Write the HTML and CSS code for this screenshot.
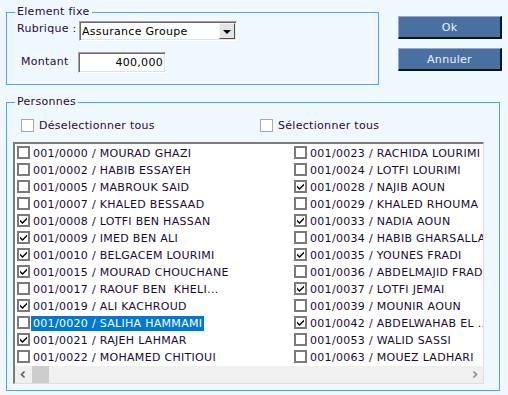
FILE: index.html
```html
<!DOCTYPE html>
<html lang="fr">
<head>
    <meta charset="UTF-8">
    <title>Element fixe</title>
    <link rel="stylesheet" href="styles.css">
</head>
<body>
    <div class="top">
        <fieldset class="group fixe">
            <legend>Element fixe</legend>
            <div class="field rubrique">
                <label>Rubrique :</label>
                <div class="combo">
                    <span class="combo-text">Assurance Groupe</span>
                    <span class="combo-btn"><span class="tri"></span></span>
                </div>
            </div>
            <div class="field montant">
                <label>Montant</label>
                <div class="amount">400,000</div>
            </div>
        </fieldset>

        <div class="actions">
            <button class="btn">Ok</button>
            <button class="btn">Annuler</button>
        </div>
    </div>

    <fieldset class="group personnes">
        <legend>Personnes</legend>
        <div class="select-all">
            <label class="opt"><span class="box"></span>Déselectionner tous</label>
            <label class="opt"><span class="box"></span>Sélectionner tous</label>
        </div>

        <div class="listbox">
            <div class="items">
                <div class="item"><span class="cb"></span><span class="txt">001/0000 / MOURAD GHAZI</span></div>
                <div class="item"><span class="cb"></span><span class="txt">001/0002 / HABIB ESSAYEH</span></div>
                <div class="item"><span class="cb"></span><span class="txt">001/0005 / MABROUK SAID</span></div>
                <div class="item"><span class="cb"></span><span class="txt">001/0007 / KHALED BESSAAD</span></div>
                <div class="item"><span class="cb on"></span><span class="txt">001/0008 / LOTFI BEN HASSAN</span></div>
                <div class="item"><span class="cb on"></span><span class="txt">001/0009 / IMED BEN ALI</span></div>
                <div class="item"><span class="cb on"></span><span class="txt">001/0010 / BELGACEM LOURIMI</span></div>
                <div class="item"><span class="cb on"></span><span class="txt">001/0015 / MOURAD CHOUCHANE</span></div>
                <div class="item"><span class="cb"></span><span class="txt">001/0017 / RAOUF BEN  KHELI...</span></div>
                <div class="item"><span class="cb on"></span><span class="txt">001/0019 / ALI KACHROUD</span></div>
                <div class="item"><span class="cb"></span><span class="txt sel">001/0020 / SALIHA HAMMAMI</span></div>
                <div class="item"><span class="cb on"></span><span class="txt">001/0021 / RAJEH LAHMAR</span></div>
                <div class="item"><span class="cb"></span><span class="txt">001/0022 / MOHAMED CHITIOUI</span></div>

                <div class="item"><span class="cb"></span><span class="txt">001/0023 / RACHIDA LOURIMI</span></div>
                <div class="item"><span class="cb"></span><span class="txt">001/0024 / LOTFI LOURIMI</span></div>
                <div class="item"><span class="cb on"></span><span class="txt">001/0028 / NAJIB AOUN</span></div>
                <div class="item"><span class="cb"></span><span class="txt">001/0029 / KHALED RHOUMA</span></div>
                <div class="item"><span class="cb on"></span><span class="txt">001/0033 / NADIA AOUN</span></div>
                <div class="item"><span class="cb"></span><span class="txt">001/0034 / HABIB GHARSALLAH</span></div>
                <div class="item"><span class="cb on"></span><span class="txt">001/0035 / YOUNES FRADI</span></div>
                <div class="item"><span class="cb"></span><span class="txt">001/0036 / ABDELMAJID FRADI</span></div>
                <div class="item"><span class="cb on"></span><span class="txt">001/0037 / LOTFI JEMAI</span></div>
                <div class="item"><span class="cb"></span><span class="txt">001/0039 / MOUNIR AOUN</span></div>
                <div class="item"><span class="cb on"></span><span class="txt">001/0042 / ABDELWAHAB EL ...</span></div>
                <div class="item"><span class="cb"></span><span class="txt">001/0053 / WALID SASSI</span></div>
                <div class="item"><span class="cb"></span><span class="txt">001/0063 / MOUEZ LADHARI</span></div>
            </div>

            <div class="hscroll">
                <span class="sb-btn">
                    <svg width="17" height="17" viewBox="0 0 17 17"><polyline points="9.5,5.5 6.5,8.5 9.5,11.5" fill="none" stroke="#606060" stroke-width="1.7"/></svg>
                </span>
                <span class="thumb"></span>
                <span class="track"></span>
                <span class="sb-btn">
                    <svg width="17" height="17" viewBox="0 0 17 17"><polyline points="7.5,5.5 10.5,8.5 7.5,11.5" fill="none" stroke="#8a8a8a" stroke-width="1.7"/></svg>
                </span>
            </div>
        </div>
    </fieldset>
</body>
</html>
```

FILE: styles.css
```css
* {
    box-sizing: border-box;
}

body {
    margin: 0;
    background: #f0f8ff;
    font-family: "DejaVu Sans", Verdana, sans-serif;
    font-size: 11px;
    letter-spacing: 0.3px;
    color: #2a0a36;
}

/* group boxes */
.group {
    margin: 0;
    padding: 0;
    border: 1px solid #4aa6f2;
    min-width: 0;
}

.group legend {
    margin-left: 8px;
    padding: 0 2px;
    line-height: 14px;
}

.top {
    display: flex;
    align-items: flex-start;
    padding-left: 6px;
}

.fixe {
    margin-top: 5px;
    width: 373px;
    padding: 2px 0 11px;
}

.field {
    display: flex;
    align-items: flex-start;
}

.field label {
    line-height: 14px;
}

.rubrique label {
    margin-left: 10px;
    width: 62px;
    padding-top: 1px;
}

.montant {
    margin-top: 11px;
}

.montant label {
    margin-left: 14px;
    width: 57px;
    padding-top: 3px;
}

.combo {
    display: flex;
    width: 158px;
    height: 20px;
    background: #fff;
    border: 1px solid;
    border-color: #a0a0a0 #fff #fff #a0a0a0;
    box-shadow: inset 1px 1px 0 #696969, inset -1px -1px 0 #e3e3e3;
    padding: 1px;
}

.combo-text {
    flex: 1;
    padding-left: 1px;
    line-height: 18px;
    color: #000;
}

.combo-btn {
    width: 16px;
    height: 16px;
    background: #e4e4e4;
    border: 1px solid;
    border-color: #f4f4f4 #505050 #505050 #f4f4f4;
    display: flex;
    align-items: center;
    justify-content: center;
}

.tri {
    width: 0;
    height: 0;
    border-left: 4px solid transparent;
    border-right: 4px solid transparent;
    border-top: 4px solid #000;
    margin-top: 1px;
}

.amount {
    width: 88px;
    height: 21px;
    background: #fff;
    border: 1px solid;
    border-color: #a0a0a0 #fff #fff #a0a0a0;
    box-shadow: inset 1px 1px 0 #696969, inset -1px -1px 0 #e3e3e3;
    text-align: right;
    padding-right: 2px;
    line-height: 19px;
    color: #000;
}

/* buttons */
.actions {
    display: flex;
    flex-direction: column;
    gap: 9px;
    margin: 16px 0 0 19px;
}

.btn {
    width: 104px;
    height: 23px;
    padding: 0;
    background: #4a70a0;
    border-style: solid;
    border-width: 1px 2px 2px 1px;
    border-color: #92aacb #0c1420 #0c1420 #92aacb;
    color: #eaf0f8;
    font-family: inherit;
    font-size: 11px;
    letter-spacing: 0.3px;
}

/* persons */
.personnes {
    margin: 10px 0 0 6px;
    width: 494px;
    padding: 10px 0 6px;
}

.select-all {
    display: flex;
    padding-left: 14px;
    height: 13px;
}

.opt {
    display: flex;
    align-items: center;
    width: 256px;
    line-height: 13px;
}

.opt .box {
    width: 13px;
    height: 13px;
    margin-right: 5px;
    background: #fff;
    border: 1px solid #a8a8a8;
}

.listbox {
    margin: 10px 0 0 6px;
    width: 471px;
    height: 242px;
    background: #fff;
    border-style: solid;
    border-width: 2px 1px 1px 2px;
    border-color: #7c7c7c #dedede #dedede #7c7c7c;
    display: flex;
    flex-direction: column;
}

.items {
    height: 222px;
    overflow: hidden;
    padding: 2px 0 0 2px;
    display: grid;
    grid-template-rows: repeat(13, 17px);
    grid-auto-flow: column;
    grid-auto-columns: 277px;
}

.item {
    display: flex;
    align-items: flex-start;
    white-space: pre;
    color: #1b0a33;
}

.cb {
    flex: none;
    width: 13px;
    height: 13px;
    background: #fff;
    border: 2px solid #7a7a7a;
}

.cb.on::after {
    content: "";
    display: block;
    width: 7px;
    height: 7px;
    margin: 1px;
    background: #000;
    clip-path: polygon(0 2.5px, 2.5px 5px, 7px 0.5px, 7px 2.5px, 2.5px 7px, 0 4.5px);
}

.txt {
    margin-left: 1px;
    padding: 0 2px;
    line-height: 15px;
}

.txt.sel {
    background: #0078d7;
    color: #fff;
}

.hscroll {
    display: flex;
    height: 17px;
    background: #f0f0f0;
}

.sb-btn {
    width: 17px;
    height: 17px;
}

.sb-btn svg {
    display: block;
}

.thumb {
    width: 17px;
    background: #cdcdcd;
}

.track {
    flex: 1;
}
```
